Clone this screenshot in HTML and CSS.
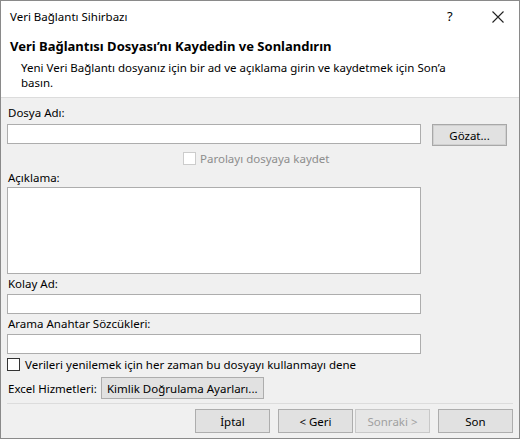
FILE: index.html
```html
<!DOCTYPE html>
<html lang="tr">
<head>
    <meta charset="UTF-8">
    <title>Veri Bağlantı Sihirbazı</title>
    <link rel="stylesheet" href="styles.css">
</head>
<body>
<div class="window">
    <div class="title-bar">
        <span class="title-text">Veri Bağlantı Sihirbazı</span>
        <span class="title-help">?</span>
        <span class="title-close">
            <svg width="12" height="12" viewBox="0 0 12 12"><path d="M0.5 0.5 L11.5 11.5 M11.5 0.5 L0.5 11.5" stroke="#222" stroke-width="1.1" fill="none"/></svg>
        </span>
    </div>
    <div class="header">
        <h1 class="header-title">Veri Bağlantısı Dosyası’nı Kaydedin ve Sonlandırın</h1>
        <p class="header-desc">Yeni Veri Bağlantı dosyanız için bir ad ve açıklama girin ve kaydetmek için Son’a basın.</p>
    </div>
    <div class="content">
        <div class="label first">Dosya Adı:</div>
        <div class="file-row">
            <div class="textbox"></div>
            <button class="btn browse">Gözat...</button>
        </div>
        <div class="check-row center disabled">
            <span class="checkbox"></span>
            <span>Parolayı dosyaya kaydet</span>
        </div>
        <div class="label">Açıklama:</div>
        <div class="textbox area"></div>
        <div class="label tight">Kolay Ad:</div>
        <div class="textbox"></div>
        <div class="label tight">Arama Anahtar Sözcükleri:</div>
        <div class="textbox"></div>
        <div class="check-row">
            <span class="checkbox"></span>
            <span>Verileri yenilemek için her zaman bu dosyayı kullanmayı dene</span>
        </div>
        <div class="services-row">
            <span class="services-label">Excel Hizmetleri:</span>
            <button class="btn auth">Kimlik Doğrulama Ayarları...</button>
        </div>
        <div class="separator"></div>
        <div class="nav-row">
            <button class="btn nav">İptal</button>
            <button class="btn nav back">&lt; Geri</button>
            <button class="btn nav" disabled>Sonraki &gt;</button>
            <button class="btn nav finish">Son</button>
        </div>
    </div>
</div>
</body>
</html>
```

FILE: styles.css
```css
body {
    margin: 0;
    background-color: #ffffff;
    font-family: "Noto Sans", "Open Sans", sans-serif;
    font-size: 11.5px;
    color: #000000;
}

.window {
    width: 520px;
    height: 439px;
    box-sizing: border-box;
    border: 1px solid #8a8a8a;
    display: flex;
    flex-direction: column;
    background-color: #f0f0f0;
}

.title-bar {
    height: 29px;
    display: flex;
    align-items: center;
    background-color: #ffffff;
}

.title-text {
    flex: 1;
    padding-left: 9px;
    padding-top: 1px;
}

.title-help {
    width: 12px;
    margin-right: 33px;
    font-size: 13px;
}

.title-close {
    width: 12px;
    height: 12px;
    margin-right: 15px;
    margin-top: 2px;
}

.header {
    background-color: #ffffff;
    height: 67px;
    border-bottom: 1px solid #dcdcdc;
}

.header-title {
    margin: 7px 0 0 9px;
    font-size: 13px;
    font-weight: bold;
    line-height: 18px;
}

.header-desc {
    margin: 5px 0 0 20px;
    width: 450px;
    line-height: 15px;
}

.content {
    padding: 0 6px;
}

.label {
    height: 16px;
    line-height: 16px;
    padding-left: 1px;
    margin-top: 4px;
    margin-bottom: 1px;
}

.label.first {
    margin-top: 7px;
    margin-bottom: 3px;
}

.label.tight {
    margin-top: 2px;
    margin-bottom: 2px;
}

.textbox {
    width: 414px;
    height: 20px;
    box-sizing: border-box;
    border: 1px solid #adadad;
    background-color: #ffffff;
}

.textbox.area {
    height: 87px;
}

.file-row {
    display: flex;
    align-items: flex-start;
    gap: 11px;
}

.btn {
    font-family: inherit;
    font-size: 11.5px;
    color: #000000;
    background-color: #e1e1e1;
    border: 1px solid #adadad;
    padding: 0;
    margin: 0;
}

.btn:disabled {
    color: #a0a0a0;
    background-color: #e6e6e6;
    border-color: #c8c8c8;
}

.browse {
    width: 75px;
    height: 22px;
    border-color: #a8a8a8;
    box-shadow: inset 0 0 0 1px #d0d0d0;
}

.check-row {
    display: flex;
    align-items: center;
    gap: 5px;
    height: 16px;
    margin-top: 2px;
}

.check-row.center {
    margin-top: 4px;
    padding-left: 176px;
    gap: 4px;
}

.checkbox {
    width: 13px;
    height: 13px;
    box-sizing: border-box;
    border: 1px solid #333333;
    background-color: #ffffff;
}

.disabled {
    color: #8d8d8d;
}

.disabled .checkbox {
    border-color: #cccccc;
}

.services-row {
    display: flex;
    align-items: center;
    gap: 4px;
    margin-top: 5px;
}

.services-label {
    padding-left: 1px;
}

.auth {
    width: 163px;
    height: 22px;
}

.separator {
    height: 1px;
    background-color: #dcdcdc;
    margin-top: 4px;
}

.nav-row {
    display: flex;
    justify-content: flex-end;
    margin-top: 5px;
}

.nav {
    width: 75px;
    height: 24px;
    margin-left: 2px;
}

.nav.back,
.nav.finish {
    margin-left: 8px;
}
```
